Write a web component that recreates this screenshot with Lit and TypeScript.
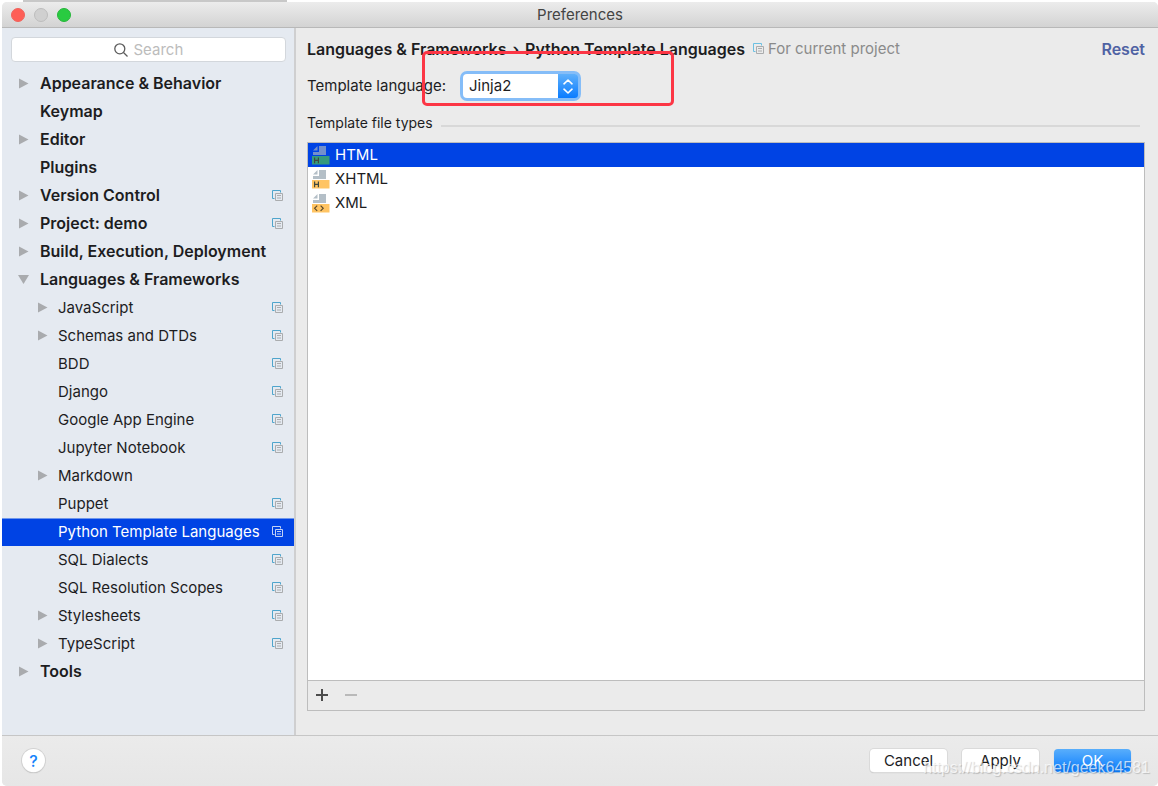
import { LitElement, html, svg, css, nothing } from "lit";
import { customElement, state } from "lit/decorators.js";

interface Item {
  label: string;
  arrow?: "closed" | "open";
  project?: boolean;
  children?: Item[];
}

const TREE: Item[] = [
  { label: "Appearance & Behavior", arrow: "closed" },
  { label: "Keymap" },
  { label: "Editor", arrow: "closed" },
  { label: "Plugins" },
  { label: "Version Control", arrow: "closed", project: true },
  { label: "Project: demo", arrow: "closed", project: true },
  { label: "Build, Execution, Deployment", arrow: "closed" },
  {
    label: "Languages & Frameworks",
    arrow: "open",
    children: [
      { label: "JavaScript", arrow: "closed", project: true },
      { label: "Schemas and DTDs", arrow: "closed", project: true },
      { label: "BDD", project: true },
      { label: "Django", project: true },
      { label: "Google App Engine", project: true },
      { label: "Jupyter Notebook", project: true },
      { label: "Markdown", arrow: "closed" },
      { label: "Puppet", project: true },
      { label: "Python Template Languages", project: true },
      { label: "SQL Dialects", project: true },
      { label: "SQL Resolution Scopes", project: true },
      { label: "Stylesheets", arrow: "closed", project: true },
      { label: "TypeScript", arrow: "closed", project: true },
    ],
  },
  { label: "Tools", arrow: "closed" },
];

const FILE_TYPES = [
  { label: "HTML", glyph: "H" },
  { label: "XHTML", glyph: "H" },
  { label: "XML", glyph: "<>" },
];

const projectIcon = html`<svg class="project" viewBox="0 0 11 12" width="11" height="12" aria-hidden="true">
  <path class="back" d="M2.5 8.5H.5V.5h8v2" />
  <path class="front" d="M3.5 3.5h7v7h-7zM5 5.500h4M5 8h4" />
</svg>`;

const arrowIcon = (kind: string) => html`<svg class="arrow" viewBox="0 0 11 12" width="11" height="12" aria-hidden="true">
  <path d=${kind === "open" ? "M0 1h11L5.5 10z" : "M1 .5 10.500 5.500 1 10.500z"} />
</svg>`;

const fileIcon = (glyph: string, selected: boolean) => html`<svg viewBox="0 0 18 19" width="18" height="19" aria-hidden="true">
  <path fill=${selected ? "#7390cb" : "#b4bfc7"} d="M7 0h7v9H1V6h6zM5.500 0v4.500H1z" />
  <path fill=${selected ? "#359a7d" : "#ffc463"} d="M0 10h17.500v8.500H0z" />
  ${glyph === "H"
    ? svg`<path fill="none" stroke="#40493f" stroke-width="1.200" d="M2.600 11.500v5.800M6.400 11.500v5.800M2.600 14.300h3.800" />`
    : svg`<path fill="none" stroke="#5a4a2c" stroke-width="1.200" d="M5.200 11.700 2.600 14.300l2.600 2.600M8.600 11.700l2.600 2.600-2.600 2.600" />`}
</svg>`;

@customElement("app-root")
export class AppRoot extends LitElement {
  @state() private page = "Python Template Languages";
  @state() private fileType = "HTML";

  static styles = css`
    :host {
      display: block;
      font-family: Inter, "Liberation Sans", sans-serif;
      font-size: 15px;
      line-height: 20px;
      color: #1d1d1f;
    }
    * {
      box-sizing: border-box;
    }
    button,
    input,
    select {
      font: inherit;
      color: inherit;
      margin: 0;
      padding: 0;
      border: 0;
      background: none;
      outline: none;
    }
    ul {
      list-style: none;
      margin: 0;
      padding: 0;
    }
    .desktop {
      display: flex;
      flex-direction: column;
      min-height: 100vh;
      padding-left: 2px;
      background: #fff;
      position: relative;
    }
    .strip {
      height: 2px;
      width: 264px;
      margin-left: 21px;
      background: #c8c8c8;
    }
    .window {
      flex: 1;
      display: flex;
      flex-direction: column;
      background: #ebebeb;
      border-radius: 5px;
    }
    .titlebar {
      display: grid;
      grid-template-columns: 1fr auto 1fr;
      align-items: center;
      height: 26px;
      padding: 0 9px;
      border-bottom: 1px solid #b8b8b8;
      border-radius: 5px 5px 0 0;
      background: linear-gradient(#ececec, #d3d3d3);
      color: #444;
    }
    .lights {
      display: flex;
      gap: 9px;
    }
    .light {
      width: 14px;
      height: 14px;
      border-radius: 50%;
      border: 1px solid #f0635c;
      background: #fe5f57;
    }
    .light.min {
      border-color: #bdbdbd;
      background: #d0d0d0;
    }
    .light.max {
      border-color: #26b63a;
      background: #29cb41;
    }
    h1 {
      margin: 0;
      font-size: 15px;
      font-weight: 400;
    }
    .body {
      flex: 1;
      display: grid;
      grid-template-columns: 294px 1fr;
    }
    .sidebar {
      background: #e5eaf1;
      border-right: 2px solid #cfcfd0;
    }
    .search {
      display: flex;
      align-items: center;
      justify-content: center;
      gap: 6px;
      height: 25px;
      margin: 9px 8px 8px 9px;
      border: 1px solid #d3d7dc;
      border-radius: 4px;
      background: #fff;
    }
    .search input {
      width: 50px;
    }
    .search input::placeholder {
      color: #bcbcbc;
      opacity: 1;
    }
    .node {
      display: flex;
      align-items: center;
      gap: 11px;
      width: 100%;
      height: 28px;
      padding: 0 11px 0 16px;
      text-align: left;
      white-space: nowrap;
      font-size: 16px;
      font-weight: 600;
    }
    .node.child {
      padding-left: 35px;
      gap: 10px;
      font-size: 15px;
      font-weight: 400;
    }
    .node.selected {
      background: #0043e4;
      color: #fff;
      box-shadow: inset 0 1px #6f97ec;
    }
    .twist {
      flex: none;
      display: flex;
      width: 11px;
    }
    .arrow {
      fill: #a9abae;
    }
    .name {
      flex: 1;
      min-width: 0;
      padding-bottom: 2px;
    }
    .child .name {
      padding-bottom: 0;
    }
    .project {
      flex: none;
      fill: none;
    }
    .back {
      stroke: #4fa5cc;
    }
    .front {
      stroke: #aaacae;
    }
    .selected .back,
    .selected .front {
      stroke: #c3d2f6;
    }
    .content {
      display: flex;
      flex-direction: column;
      padding: 11px 13px 24px 11px;
    }
    .crumbs {
      display: flex;
      align-items: center;
      height: 20px;
      font-size: 16px;
      font-weight: 600;
    }
    .crumbs ol {
      display: flex;
      gap: 6px;
      list-style: none;
      margin: 0 8px 0 0;
      padding: 0;
    }
    .scope {
      display: flex;
      align-items: center;
      gap: 4px;
      flex: 1;
      color: #8a8a8a;
      font-size: 15px;
      font-weight: 400;
    }
    .scope .back {
      stroke: #6cc0e2;
    }
    .reset {
      color: #4f62a3;
    }
    .language {
      display: flex;
      align-items: center;
      height: 30px;
      margin-top: 12px;
      gap: 17px;
    }
    .combo {
      display: grid;
      grid-template-columns: 95px 20px;
      border-radius: 4px;
      background: #fff;
      box-shadow: 0 0 0 3px #85bdf8;
    }
    .combo select {
      grid-area: 1 / 1 / 2 / 3;
      appearance: none;
      height: 24px;
      padding: 0 26px 0 6px;
    }
    .stepper {
      grid-area: 1 / 2;
      pointer-events: none;
      display: grid;
      place-items: center;
      border-radius: 0 3px 3px 0;
      background: linear-gradient(#5fb0fb, #0a7cff);
    }
    .group {
      display: flex;
      align-items: center;
      gap: 8px;
      margin: 12px 5px 9px 0;
      font-size: 14px;
    }
    .group h2 {
      margin: 0;
      font-size: inherit;
      font-weight: 400;
    }
    .rule {
      flex: 1;
      height: 2px;
      margin-top: 6px;
      background: #d8d8d8;
    }
    .panel {
      flex: 1;
      display: flex;
      flex-direction: column;
      border: 1px solid #bdbdbd;
      background: #fff;
    }
    .files {
      flex: 1;
    }
    .file {
      display: flex;
      align-items: center;
      gap: 5px;
      width: 100%;
      height: 24px;
      padding: 0 4px;
      text-align: left;
    }
    .file.selected {
      background: #0043e4;
      color: #fff;
    }
    .tools {
      display: flex;
      align-items: center;
      height: 30px;
      gap: 17px;
      padding: 0 8px 2px;
      border-top: 1px solid #bdbdbd;
      background: #ebebeb;
    }
    .tools button {
      display: flex;
    }
    .footer {
      display: flex;
      align-items: center;
      gap: 15px;
      height: 51px;
      padding: 0 27px 1px 20px;
      border-top: 1px solid #c6c6c6;
      background: linear-gradient(#ebebeb, #e6e6e6);
      border-radius: 0 0 5px 5px;
    }
    .help {
      width: 23px;
      height: 23px;
      margin-right: auto;
      border-radius: 50%;
      background: #fff;
      color: #1683fb;
      font-size: 16px;
      font-weight: 500;
      box-shadow: 0 0 0 1px #d2d2d2, 0 1px 1px #aaa;
    }
    .action {
      width: 77px;
      height: 23px;
      border-radius: 4px;
      background: #fff;
      box-shadow: 0 0 0 1px #dadada, 0 1px 1px #b4b4b4;
    }
    .action.primary {
      background: linear-gradient(#59aefb, #0a7dff);
      box-shadow: 0 1px 1px #8db4dd;
      color: #fff;
    }
    .marker {
      position: absolute;
      left: 422px;
      top: 51px;
      width: 252px;
      height: 55px;
      border: 3px solid #fc3645;
      border-radius: 5px;
      pointer-events: none;
    }
    .watermark {
      position: absolute;
      right: 8px;
      bottom: 8px;
      font: 16px/20px "Liberation Sans", sans-serif;
      color: rgba(255, 255, 255, 0.7);
      text-shadow: 1px 1px 1px rgba(0, 0, 0, 0.18);
      pointer-events: none;
    }
  `;

  private renderNode(item: Item, child = false): unknown {
    const selected = item.label === this.page;
    return html`<li>
      <button
        class="node ${child ? "child" : ""} ${selected ? "selected" : ""}"
        @click=${() => (this.page = item.label)}
      >
        <span class="twist">${item.arrow ? arrowIcon(item.arrow) : nothing}</span>
        <span class="name">${item.label}</span>
        ${item.project ? projectIcon : nothing}
      </button>
      ${item.children ? html`<ul>${item.children.map((c) => this.renderNode(c, true))}</ul>` : nothing}
    </li>`;
  }

  render() {
    return html`<div class="desktop">
      <div class="strip"></div>
      <div class="window">
        <header class="titlebar">
          <div class="lights">
            <button class="light" aria-label="Close"></button>
            <button class="light min" aria-label="Minimize"></button>
            <button class="light max" aria-label="Zoom"></button>
          </div>
          <h1>Preferences</h1>
        </header>
        <div class="body">
          <nav class="sidebar">
            <label class="search">
              <svg viewBox="0 0 14 14" width="14" height="14" fill="none" stroke="#5c5c5c" stroke-width="1.300" aria-hidden="true">
                <circle cx="5.800" cy="5.800" r="5" />
                <path d="m9.500 9.500 4 4" />
              </svg>
              <input type="text" placeholder="Search" aria-label="Search" />
            </label>
            <ul>
              ${TREE.map((i) => this.renderNode(i))}
            </ul>
          </nav>
          <main class="content">
            <div class="crumbs">
              <ol>
                <li>Languages &amp; Frameworks</li>
                <li>›</li>
                <li>Python Template Languages</li>
              </ol>
              <span class="scope">${projectIcon}<span>For current project</span></span>
              <button class="reset">Reset</button>
            </div>
            <div class="language">
              <label for="language">Template language:</label>
              <div class="combo">
                <select id="language">
                  <option>Jinja2</option>
                  <option>Django</option>
                  <option>Mako</option>
                </select>
                <span class="stepper">
                  <svg viewBox="0 0 10 15" width="10" height="15" fill="none" stroke="#fff" stroke-width="1.600" stroke-linecap="round" stroke-linejoin="round" aria-hidden="true">
                    <path d="M1 4.800 5 1l4 3.800M1 10.200 5 14l4-3.800" />
                  </svg>
                </span>
              </div>
            </div>
            <div class="group">
              <h2>Template file types</h2>
              <span class="rule"></span>
            </div>
            <section class="panel">
              <ul class="files">
                ${FILE_TYPES.map((f) => {
                  const on = f.label === this.fileType;
                  return html`<li>
                    <button class="file ${on ? "selected" : ""}" @click=${() => (this.fileType = f.label)}>
                      ${fileIcon(f.glyph, on)}<span>${f.label}</span>
                    </button>
                  </li>`;
                })}
              </ul>
              <div class="tools">
                <button aria-label="Add">
                  <svg viewBox="0 0 12 12" width="12" height="12" stroke="#4c4c4c" stroke-width="2"><path d="M0 6h12M6 0v12" /></svg>
                </button>
                <button aria-label="Remove" disabled>
                  <svg viewBox="0 0 12 12" width="12" height="12" stroke="#b9b9b9" stroke-width="2"><path d="M0 6h12" /></svg>
                </button>
              </div>
            </section>
          </main>
        </div>
        <footer class="footer">
          <button class="help" aria-label="Help">?</button>
          <button class="action">Cancel</button>
          <button class="action">Apply</button>
          <button class="action primary">OK</button>
        </footer>
      </div>
      <div class="marker"></div>
      <div class="watermark">https://blog.csdn.net/geek64581</div>
    </div>`;
  }
}
